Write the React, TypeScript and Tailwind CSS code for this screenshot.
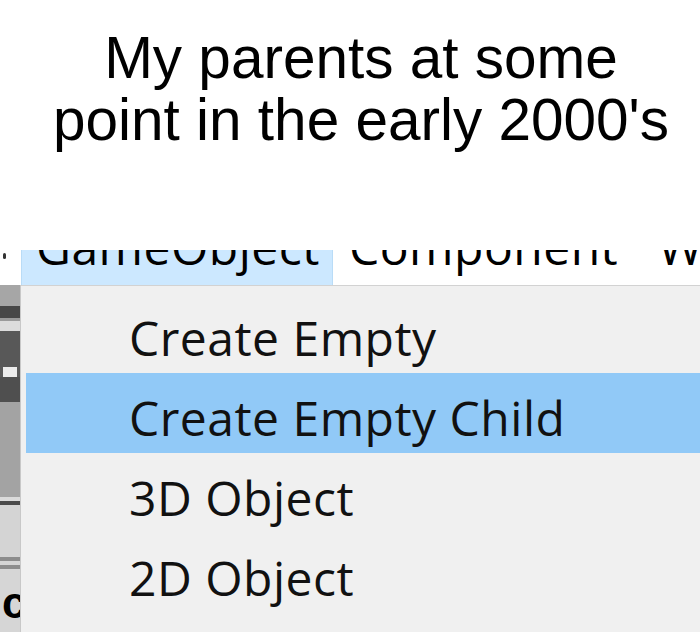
import React from 'react';

const menuFont = "font-['Open_Sans','Noto_Sans',sans-serif]";

const items = ['Create Empty', 'Create Empty Child', '3D Object', '2D Object'];

function SideStrip() {
  // cut-off editor widget on the left edge
  return (
    <div className="flex w-[21px] shrink-0 flex-col overflow-hidden border-r border-[#c8c8c8]">
      <div className="h-[21px] bg-[#a6a6a6]" />
      <div className="h-[12px] bg-[#474747]" />
      <div className="h-[3px] bg-[#9a9a9a]" />
      <div className="h-[10px] bg-[#dcdcdc]" />
      <div className="h-[36px] bg-[#585858]" />
      <div className="h-[10px] bg-[#5a5a5a] px-[3px]">
        <div className="h-full bg-[#ececec]" />
      </div>
      <div className="h-[25px] bg-[#4f4f4f]" />
      <div className="h-[95px] bg-[#a3a3a3]" />
      <div className="h-[4px] bg-[#dadada]" />
      <div className="h-[4px] bg-[#4a4a4a]" />
      <div className="h-[52px] bg-[#d4d4d4]" />
      <div className="h-[4px] bg-[#8c8c8c]" />
      <div className="h-[4px] bg-[#d4d4d4]" />
      <div className="h-[4px] bg-[#8c8c8c]" />
      <div className="flex-1 bg-[#d6d6d6] pl-[2px] pt-[14px]">
        <span className="block font-['Liberation_Sans',sans-serif] text-[44px] font-bold leading-[40px] text-black">
          c
        </span>
      </div>
    </div>
  );
}

export default function App() {
  return (
    <div className="h-[632px] w-[700px] overflow-hidden bg-white">
      <h1 className="pl-[22px] pt-[27px] text-center font-['Liberation_Sans',Arial,sans-serif] text-[58.5px] font-normal leading-[62px] text-black">
        My parents at some
        <br />
        point in the early 2000's
      </h1>

      <div className={`mt-[99px] flex h-[35px] overflow-hidden ${menuFont} text-[48px] tracking-[0.5px] text-black`}>
        <div className="w-[21px] shrink-0 pl-[3px] pt-[3px]">
          <div className="h-[6px] w-[3px] rounded-full bg-[#333]" />
        </div>
        <div className="flex w-[312px] shrink-0 items-end border-x border-[#b9dcf7] bg-[#cce8ff] pl-[14px]">
          <span className="mb-[14px] leading-none">GameObject</span>
        </div>
        <div className="flex items-end pl-[16px]">
          <span className="mb-[14px] leading-none whitespace-nowrap">Component</span>
        </div>
        <div className="flex items-end pl-[40px]">
          <span className="mb-[14px] leading-none">W</span>
        </div>
      </div>

      <div className="flex h-[347px]">
        <SideStrip />
        <div className={`flex-1 border-t border-[#d2d2d2] bg-[#f0f0f0] pl-[5px] pt-[7px] ${menuFont}`}>
          {items.map((label, i) => (
            <div
              key={label}
              className={`h-[80px] pl-[103px] pt-[11px] text-[48px] tracking-[0.5px] leading-[68px] text-[#111] whitespace-nowrap ${
                i === 1 ? 'bg-[#91c9f7]' : ''
              }`}
            >
              {label}
            </div>
          ))}
        </div>
      </div>
    </div>
  );
}
